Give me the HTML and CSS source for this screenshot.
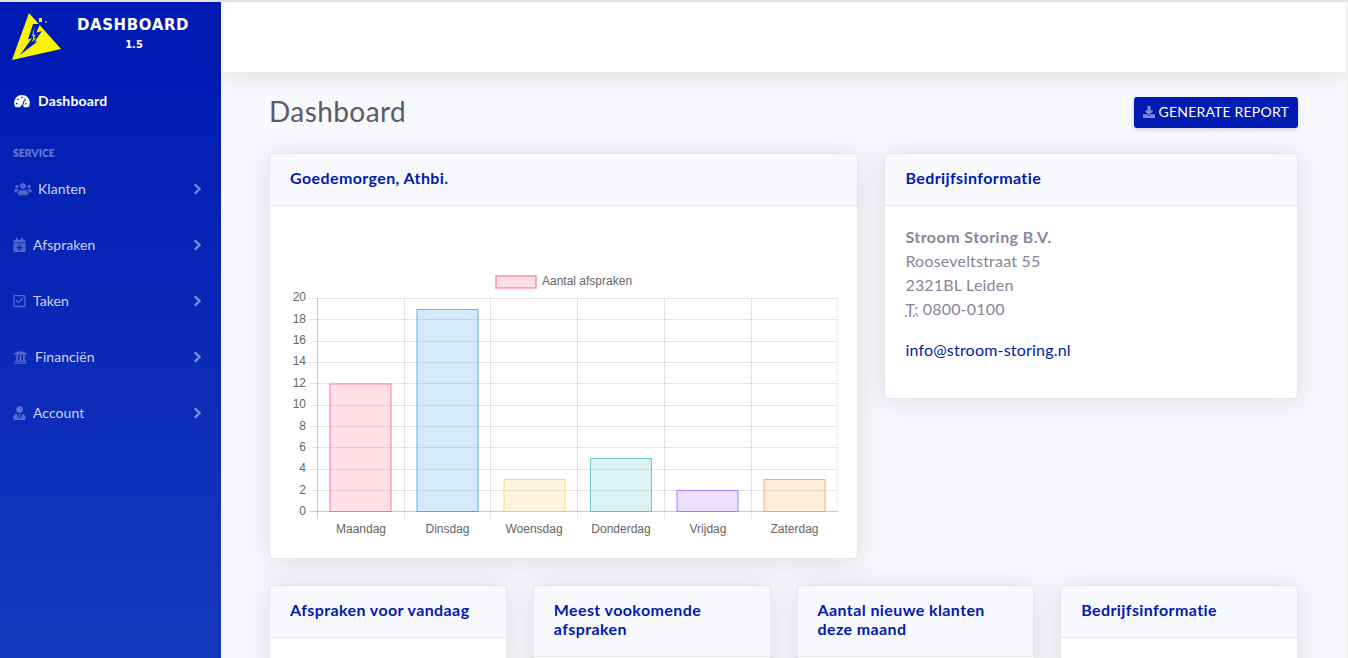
FILE: index.html
```html
<!DOCTYPE html>
<html lang="en">
<head>
  <meta charset="UTF-8" />
  <title>Dashboard</title>
  <link rel="stylesheet" href="styles.css">
</head>
<body>
  <div class="app">
    <aside class="sidebar">
      <div class="brand">
        <svg class="brand-logo" viewBox="0 0 50 48" width="50" height="48">
          <polygon points="17,0 49,36 0,47" fill="#fbf500"/>
          <polygon points="21,11 28,11 24.500,19.500 30,18 22.500,29 26,28 8,42 20,25 16,26.500" fill="#001db3"/>
          <polygon points="22.500,14 20,23 24,21.500 19,30 24,25 21,25.500" fill="#fbf500"/>
          <polygon points="23,0 33,0 33,12 28,9 27,6" fill="#001db3"/>
          <rect x="27" y="5" width="3" height="4" fill="#fbf500"/>
          <rect x="33" y="8" width="2" height="2" fill="#8a8f70"/>
        </svg>
        <div class="brand-text">
          <div class="brand-name">Dashboard</div>
          <div class="brand-version">1.5</div>
        </div>
      </div>

      <a class="nav-item nav-active">
        <svg class="icon icon-gauge" viewBox="0 0 576 512"><path d="M288 32C129 32 0 161 0 320c0 53 14 102 39 145 6 9 16 15 27 15h444c11 0 21-6 27-15 25-43 39-92 39-145 0-159-129-288-288-288zm0 64c15 0 27 11 31 25-1 2-2 4-3 6l-9 28c-5 3-12 5-19 5-18 0-32-14-32-32s14-32 32-32zM96 384c-18 0-32-14-32-32s14-32 32-32 32 14 32 32-14 32-32 32zm48-160c-18 0-32-14-32-32s14-32 32-32 32 14 32 32-14 32-32 32zm247 17l-61 184c14 15 22 33 22 55H224c0-39 32-64 64-64h2l62-186c3-9 14-15 24-12s18 13 15 23zm14 143c-6-7-10-16-10-26 0-18 14-32 32-32s32 14 32 32-14 26-32 26h-22zm-3-160c-18 0-32-14-32-32 0-2 0-5 1-7 5-14 18-25 31-25 18 0 32 14 32 32s-14 32-32 32z"/></svg>
        <span>Dashboard</span>
      </a>

      <div class="nav-heading">Service</div>

      <a class="nav-item">
        <svg class="icon icon-users" viewBox="0 0 640 512"><path d="M96 224c35 0 64-29 64-64s-29-64-64-64-64 29-64 64 29 64 64 64zm448 0c35 0 64-29 64-64s-29-64-64-64-64 29-64 64 29 64 64 64zm32 32h-64c-18 0-34 7-45 19 40 22 69 62 75 109h66c18 0 32-14 32-32v-32c0-35-29-64-64-64zm-256 0c62 0 112-50 112-112S382 32 320 32 208 82 208 144s50 112 112 112zm77 32h-8c-21 10-44 16-69 16s-48-6-69-16h-8c-64 0-115 52-115 115v29c0 26 21 48 48 48h288c27 0 48-22 48-48v-29c0-63-52-115-115-115zm-224-13c-11-12-27-19-45-19H64c-35 0-64 29-64 64v32c0 18 14 32 32 32h66c6-47 35-87 75-109z"/></svg>
        <span class="nav-label">Klanten</span>
        <svg class="chevron" viewBox="0 0 320 512"><path d="M285 273L91 467c-9 9-24 9-34 0l-22-22c-10-10-10-25-1-34l155-155L34 101c-9-9-9-24 1-34l22-22c10-9 25-9 34 0l194 194c10 9 10 25 0 34z"/></svg>
      </a>

      <a class="nav-item">
        <svg class="icon icon-calendar" viewBox="0 0 448 512"><path d="M436 160H12c-7 0-12-5-12-12v-36c0-27 21-48 48-48h48V12c0-7 5-12 12-12h40c7 0 12 5 12 12v52h128V12c0-7 5-12 12-12h40c7 0 12 5 12 12v52h48c27 0 48 21 48 48v36c0 7-5 12-12 12zM12 192h424c7 0 12 5 12 12v260c0 27-21 48-48 48H48c-27 0-48-21-48-48V204c0-7 5-12 12-12zm316 140c0-7-5-12-12-12h-60v-60c0-7-5-12-12-12h-40c-7 0-12 5-12 12v60h-60c-7 0-12 5-12 12v40c0 7 5 12 12 12h60v60c0 7 5 12 12 12h40c7 0 12-5 12-12v-60h60c7 0 12-5 12-12v-40z"/></svg>
        <span class="nav-label">Afspraken</span>
        <svg class="chevron" viewBox="0 0 320 512"><path d="M285 273L91 467c-9 9-24 9-34 0l-22-22c-10-10-10-25-1-34l155-155L34 101c-9-9-9-24 1-34l22-22c10-9 25-9 34 0l194 194c10 9 10 25 0 34z"/></svg>
      </a>

      <a class="nav-item">
        <svg class="icon icon-check" viewBox="0 0 448 512"><path d="M400 32H48C21 32 0 54 0 80v352c0 27 21 48 48 48h352c27 0 48-21 48-48V80c0-26-21-48-48-48zm-6 400H54c-3 0-6-3-6-6V86c0-3 3-6 6-6h340c3 0 6 3 6 6v340c0 3-3 6-6 6zm-35-257L190 342c-5 5-12 5-17 0l-84-84c-5-5-5-12 0-17l23-23c5-5 12-5 17 0l52 53 137-136c5-5 12-5 17 0l23 23c5 5 5 12 1 17z"/></svg>
        <span class="nav-label">Taken</span>
        <svg class="chevron" viewBox="0 0 320 512"><path d="M285 273L91 467c-9 9-24 9-34 0l-22-22c-10-10-10-25-1-34l155-155L34 101c-9-9-9-24 1-34l22-22c10-9 25-9 34 0l194 194c10 9 10 25 0 34z"/></svg>
      </a>

      <a class="nav-item">
        <svg class="icon icon-bank" viewBox="0 0 512 512"><path d="M496 128v16c0 4-4 8-8 8h-24v12c0 7-5 12-12 12H60c-7 0-12-5-12-12v-12H24c-4 0-8-4-8-8v-16c0-3 2-6 5-7L253 33c2-1 4-1 6 0l232 88c3 1 5 4 5 7zm-24 328H40c-13 0-24 11-24 24v16c0 4 4 8 8 8h464c4 0 8-4 8-8v-16c0-13-11-24-24-24zM96 192v192H60c-7 0-12 5-12 12v36h416v-36c0-7-5-12-12-12h-36V192h-64v192h-64V192h-64v192h-64V192H96z"/></svg>
        <span class="nav-label">Financiën</span>
        <svg class="chevron" viewBox="0 0 320 512"><path d="M285 273L91 467c-9 9-24 9-34 0l-22-22c-10-10-10-25-1-34l155-155L34 101c-9-9-9-24 1-34l22-22c10-9 25-9 34 0l194 194c10 9 10 25 0 34z"/></svg>
      </a>

      <a class="nav-item">
        <svg class="icon icon-user" viewBox="0 0 448 512"><path d="M224 256c71 0 128-57 128-128S295 0 224 0 96 57 96 128s57 128 128 128zm96 33l-48 191-32-136 32-56h-96l32 56-32 136-48-191C56 292 0 349 0 419v45c0 27 21 48 48 48h352c27 0 48-21 48-48v-45c0-70-56-127-128-130z"/></svg>
        <span class="nav-label">Account</span>
        <svg class="chevron" viewBox="0 0 320 512"><path d="M285 273L91 467c-9 9-24 9-34 0l-22-22c-10-10-10-25-1-34l155-155L34 101c-9-9-9-24 1-34l22-22c10-9 25-9 34 0l194 194c10 9 10 25 0 34z"/></svg>
      </a>
    </aside>

    <div class="main">
      <header class="topbar"></header>

      <div class="content">
        <div class="page-head">
          <h1>Dashboard</h1>
          <a class="btn-report">
            <svg class="btn-icon" viewBox="0 0 512 512"><path d="M216 0h80c13 0 24 11 24 24v168h88c18 0 27 22 14 34L270 379c-8 8-20 8-28 0L90 226c-13-12-4-34 14-34h88V24c0-13 11-24 24-24zm296 376v112c0 13-11 24-24 24H24c-13 0-24-11-24-24V376c0-13 11-24 24-24h147l49 49c20 20 52 20 72 0l49-49h147c13 0 24 11 24 24z"/></svg>
            Generate Report
          </a>
        </div>

        <div class="grid">
          <section class="card span-7">
            <div class="card-header">Goedemorgen, Athbi.</div>
            <div class="card-body">
              <svg class="chart" viewBox="290 226 548 312" width="548" height="312">
                <rect x="496" y="276" width="40" height="12" fill="rgba(255,99,132,.2)" stroke="rgba(255,99,132,.5)" stroke-width="2"/>
                <text x="542" y="285" class="chart-text">Aantal afspraken</text>

                <g class="grid-lines">
                  <path d="M310 298.500H838M310 319.500H838M310 341.500H838M310 362.500H838M310 383.500H838M310 405.500H838M310 426.500H838M310 447.500H838M310 469.500H838M310 490.500H838"/>
                  <path d="M404.500 298V519M490.500 298V519M577.500 298V519M664.500 298V519M751.500 298V519M838 298V512"/>
                </g>
                <path d="M317.500 298V519M310 511.500H838" class="axis-lines"/>

                <rect x="330" y="384" width="61" height="127.500" fill="rgba(255,99,132,.2)" stroke="rgba(255,99,132,.8)"/>
                <rect x="417" y="309.500" width="61" height="202" fill="rgba(54,162,235,.2)" stroke="rgba(54,162,235,.8)"/>
                <rect x="504" y="479.500" width="61" height="32" fill="rgba(255,206,86,.2)" stroke="rgba(255,206,86,.8)"/>
                <rect x="590.500" y="458.500" width="61" height="53" fill="rgba(75,192,192,.2)" stroke="rgba(75,192,192,.8)"/>
                <rect x="677" y="490.500" width="61" height="21" fill="rgba(153,102,255,.2)" stroke="rgba(153,102,255,.8)"/>
                <rect x="764" y="479.500" width="61" height="32" fill="rgba(255,159,64,.2)" stroke="rgba(255,159,64,.8)"/>

                <g class="chart-text y-labels">
                  <text x="306" y="301">20</text>
                  <text x="306" y="323">18</text>
                  <text x="306" y="344">16</text>
                  <text x="306" y="365">14</text>
                  <text x="306" y="387">12</text>
                  <text x="306" y="408">10</text>
                  <text x="306" y="430">8</text>
                  <text x="306" y="451">6</text>
                  <text x="306" y="472">4</text>
                  <text x="306" y="494">2</text>
                  <text x="306" y="515">0</text>
                </g>
                <g class="chart-text x-labels">
                  <text x="361" y="533">Maandag</text>
                  <text x="447.500" y="533">Dinsdag</text>
                  <text x="534" y="533">Woensdag</text>
                  <text x="621" y="533">Donderdag</text>
                  <text x="708" y="533">Vrijdag</text>
                  <text x="794.500" y="533">Zaterdag</text>
                </g>
              </svg>
            </div>
          </section>

          <section class="card span-5 card-info">
            <div class="card-header">Bedrijfsinformatie</div>
            <div class="card-body">
              <address>
                <strong>Stroom Storing B.V.</strong><br>
                Rooseveltstraat 55<br>
                2321BL Leiden<br>
                <abbr>T:</abbr> 0800-0100
              </address>
              <p><a class="link">info@stroom-storing.nl</a></p>
            </div>
          </section>

          <section class="card span-3">
            <div class="card-header">Afspraken voor vandaag</div>
            <div class="card-body"></div>
          </section>
          <section class="card span-3">
            <div class="card-header">Meest vookomende afspraken</div>
            <div class="card-body"></div>
          </section>
          <section class="card span-3">
            <div class="card-header">Aantal nieuwe klanten deze maand</div>
            <div class="card-body"></div>
          </section>
          <section class="card span-3">
            <div class="card-header">Bedrijfsinformatie</div>
            <div class="card-body"></div>
          </section>
        </div>
      </div>
    </div>
  </div>
</body>
</html>
```

FILE: styles.css
```css
* {
  box-sizing: border-box;
}

html,
body {
  height: 100%;
  margin: 0;
  overflow: hidden;
}

body {
  font-family: Lato, "Noto Sans", sans-serif;
  font-size: 16px;
  line-height: 24px;
  color: #858796;
  background-color: #f1f1f3;
  border-top: 2px solid #e2e2e2;
  padding-right: 2px;
}

.app {
  display: flex;
  height: 100%;
  overflow: hidden;
  background-color: #f8f9fc;
}

/* Sidebar */
.sidebar {
  flex: 0 0 221px;
  background-image: linear-gradient(180deg, #001bb3 10%, #1539bd 100%);
}

.brand {
  display: flex;
  height: 70px;
  padding: 11px 0 0 12px;
}

.brand-logo {
  flex: none;
}

.brand-text {
  width: 120px;
  margin-left: 11px;
  color: #fff;
  font-family: "DejaVu Sans", sans-serif;
  font-weight: 700;
  text-align: center;
}

.brand-name {
  margin-top: 1px;
  font-size: 15px;
  line-height: 22px;
  letter-spacing: 0.6px;
  text-transform: uppercase;
}

.brand-version {
  margin-top: 1px;
  padding-left: 2px;
  font-size: 10px;
  line-height: 16px;
}

.nav-item {
  display: flex;
  align-items: center;
  height: 56px;
  padding: 0 19px 0 13px;
  font-size: 14px;
  letter-spacing: 0.05px;
  color: rgba(255, 255, 255, 0.8);
}

.nav-active {
  margin-top: 1px;
  margin-bottom: 16px;
  font-weight: 700;
  letter-spacing: 0.2px;
  color: #fff;
}

.nav-heading {
  height: 16px;
  padding-left: 13px;
  font-size: 10.400px;
  font-weight: 800;
  line-height: 16px;
  text-transform: uppercase;
  color: rgba(255, 255, 255, 0.4);
}

.icon {
  flex: none;
  height: 14px;
  fill: rgba(255, 255, 255, 0.3);
}

.nav-active .icon {
  fill: #fff;
}

.icon-gauge { width: 18px; margin-right: 7px; }
.icon-users { width: 20px; margin-right: 5px; }
.icon-calendar { width: 13px; margin-right: 7px; }
.icon-check { width: 13px; margin-right: 7px; }
.icon-bank { width: 15px; margin-right: 7px; }
.icon-user { width: 13px; margin-right: 7px; }

.nav-label {
  flex: 1;
}

.chevron {
  width: 9px;
  height: 12px;
  fill: #fff;
  stroke: #fff;
  stroke-width: 30;
  opacity: 0.45;
}

/* Main */
.main {
  flex: 1;
  min-width: 0;
}

.topbar {
  height: 70px;
  background-color: #fff;
  box-shadow: 0 2px 28px rgba(58, 59, 69, 0.15);
  position: relative;
  z-index: 1;
}

.content {
  padding: 25px 48px 0;
}

.page-head {
  display: flex;
  justify-content: space-between;
  align-items: center;
  height: 31px;
  margin-bottom: 25px;
}

.page-head h1 {
  margin: 0 0 3px;
  font-size: 28px;
  font-weight: 400;
  line-height: 34px;
  color: #5a5c69;
  letter-spacing: 0.42px;
}

.btn-report {
  display: flex;
  align-items: center;
  height: 31px;
  padding: 0 9px 2px;
  border-radius: 3px;
  font-size: 14px;
  letter-spacing: 0.2px;
  text-transform: uppercase;
  color: #fff;
  background-color: #001bb3;
  box-shadow: 0 2px 4px rgba(58, 59, 69, 0.2);
}

.btn-icon {
  width: 12px;
  height: 12px;
  margin-right: 4px;
  fill: rgba(255, 255, 255, 0.5);
}

.grid {
  display: grid;
  grid-template-columns: repeat(12, 1fr);
  gap: 26px;
  align-items: start;
}

.span-7 { grid-column: span 7; }
.span-5 { grid-column: span 5; }
.span-3 { grid-column: span 3; }

.card {
  background-color: #fff;
  border: 1px solid #e3e6f0;
  border-radius: 5px;
  box-shadow: 0 2px 28px rgba(58, 59, 69, 0.15);
  overflow: hidden;
}

.card-header {
  padding: 14px 20px 18px;
  font-size: 16px;
  font-weight: 700;
  line-height: 19px;
  letter-spacing: 0.4px;
  color: #001bb3;
  background-color: #f8f9fc;
  border-bottom: 1px solid #e3e6f0;
}

.card-body {
  padding: 20px;
}

.card-info .card-body {
  letter-spacing: 0.2px;
}

.card-info strong {
  letter-spacing: 0.45px;
}

address {
  margin-top: -1px;
  margin-bottom: 17px;
  font-style: normal;
}

abbr {
  text-decoration: underline dotted;
}

.card-info p {
  margin: 0 0 16px;
}

.link {
  color: #001bb3;
}

/* Chart */
.chart {
  display: block;
}

.chart-text {
  font-family: "Liberation Sans", Arial, sans-serif;
  font-size: 12px;
  fill: #666;
}

.grid-lines path {
  fill: none;
  stroke: rgba(0, 0, 0, 0.1);
}

.axis-lines {
  fill: none;
  stroke: rgba(0, 0, 0, 0.2);
}

.y-labels {
  text-anchor: end;
}

.x-labels {
  text-anchor: middle;
}
```
